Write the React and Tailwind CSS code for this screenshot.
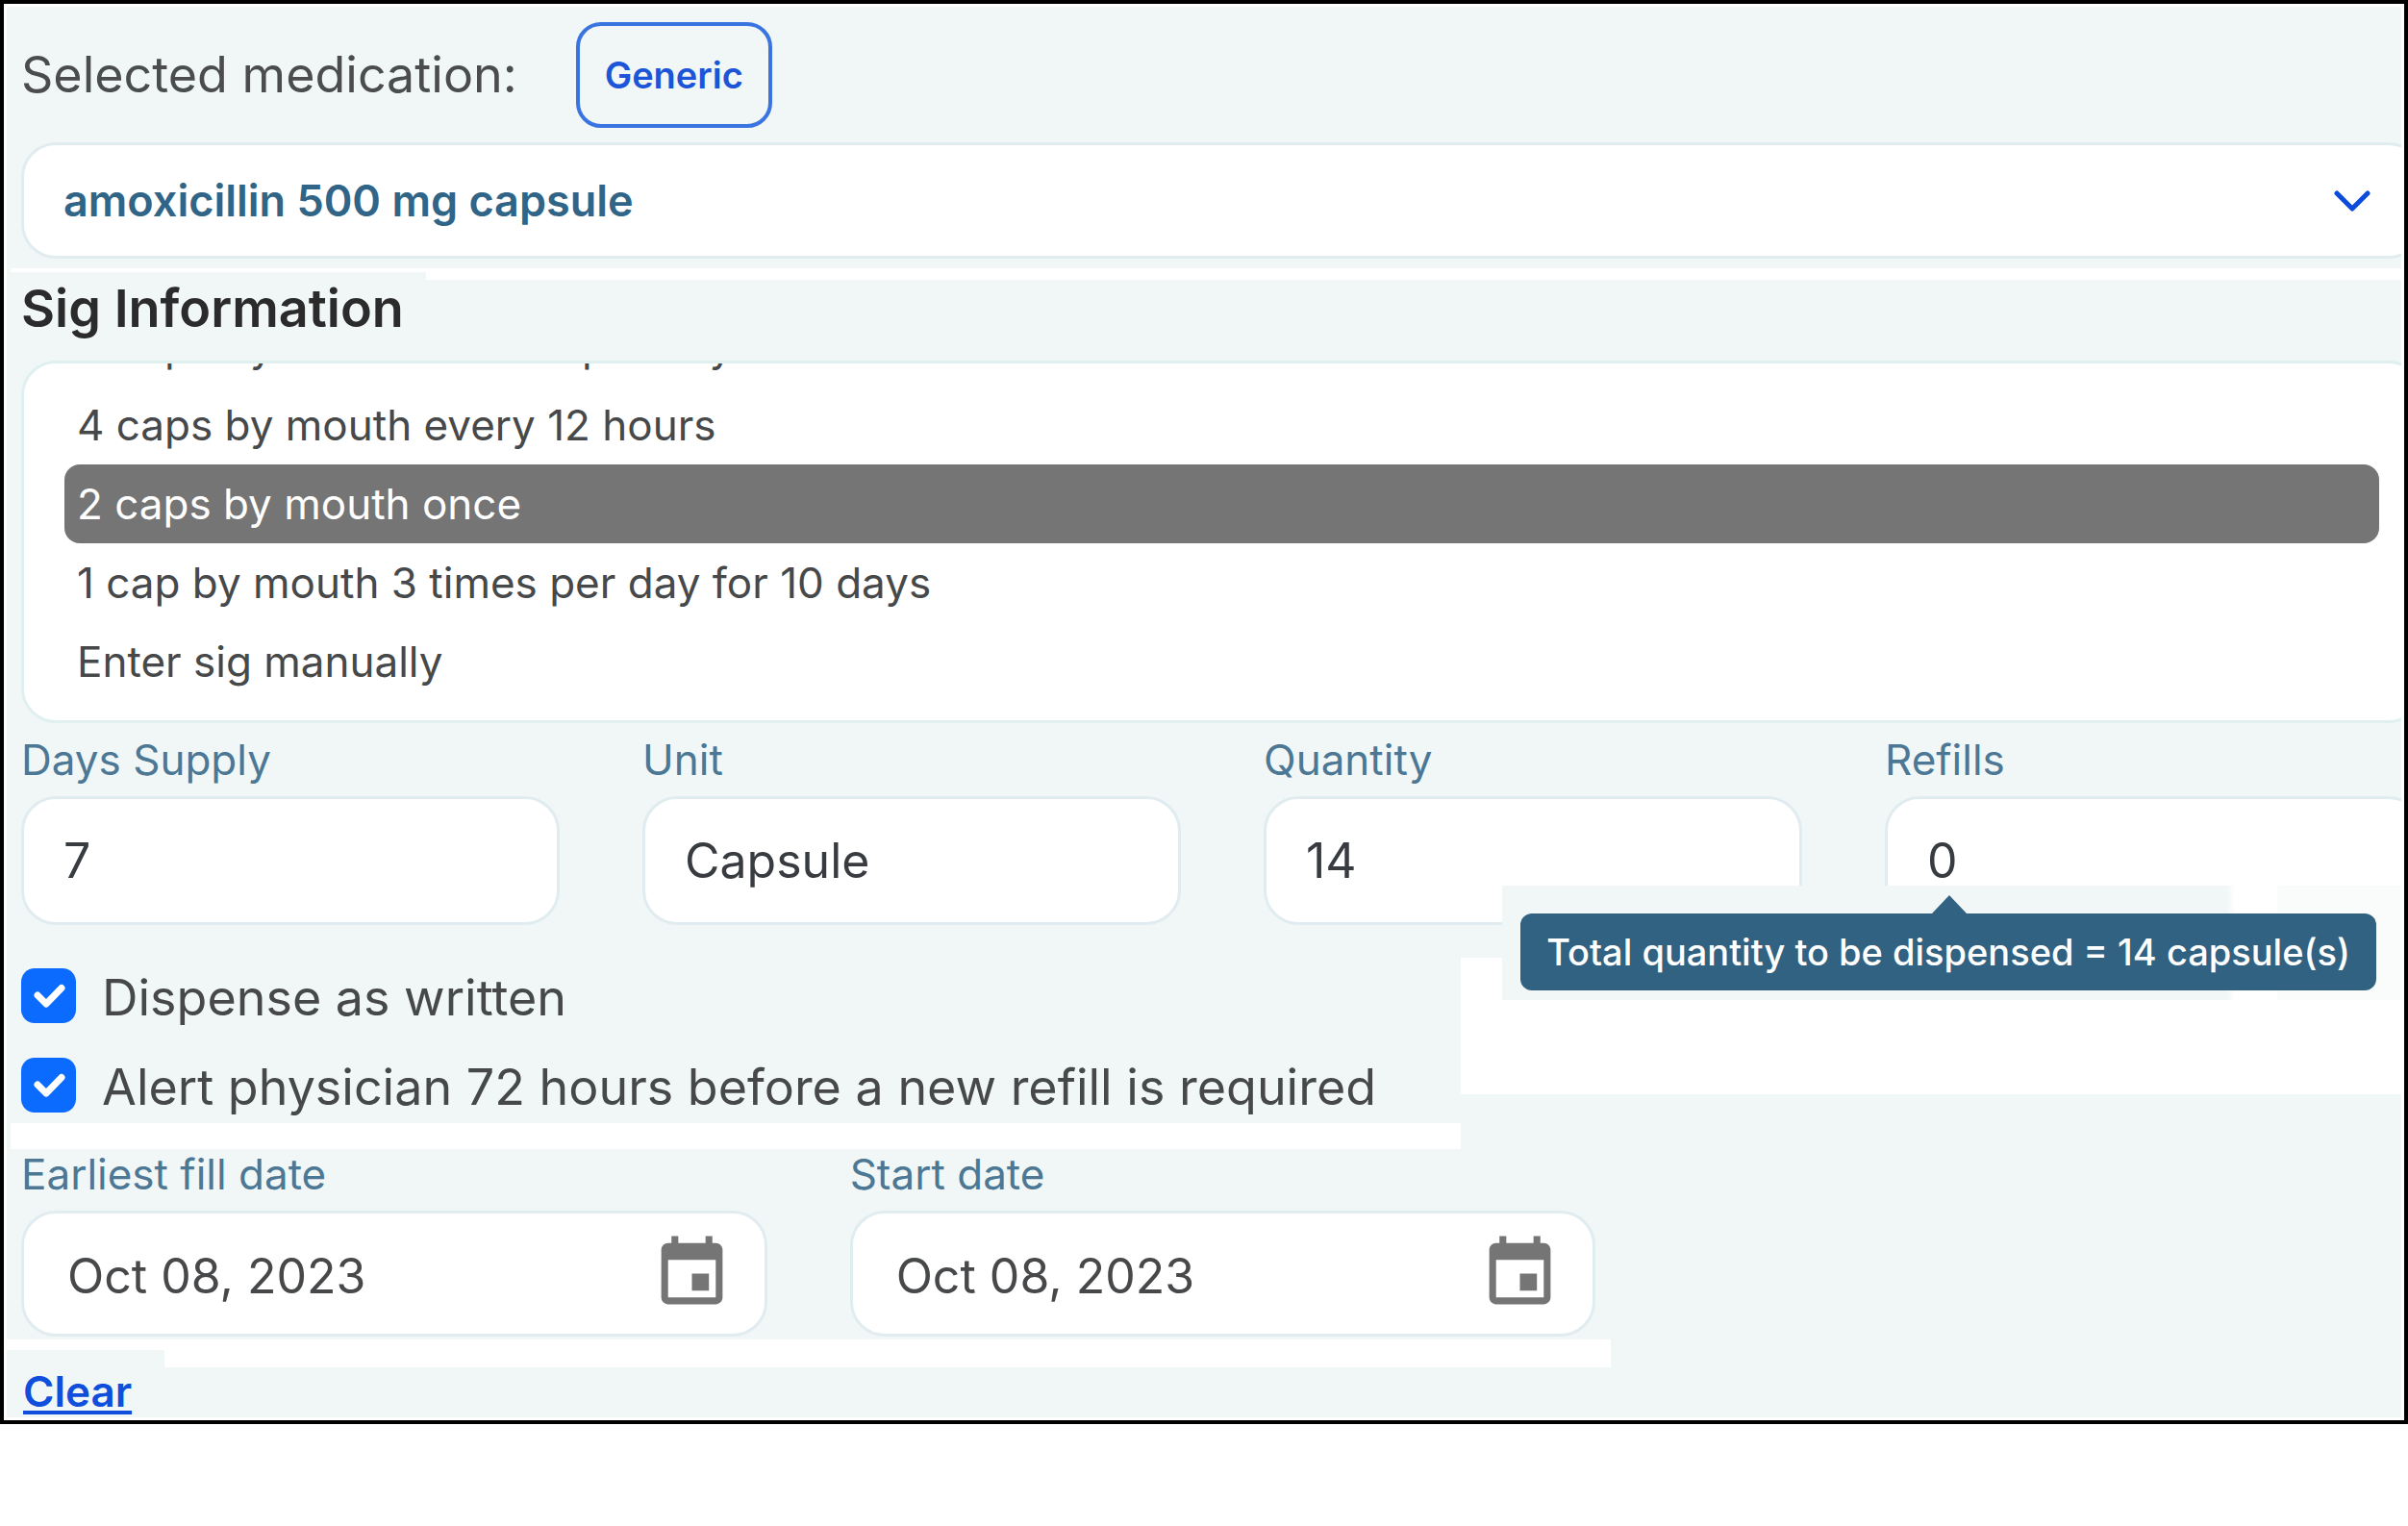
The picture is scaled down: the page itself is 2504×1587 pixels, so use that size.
import React, { useState } from "react";

const FIELD =
  "block w-full min-w-0 rounded-[36px] border-[3px] border-[#e0ecef] bg-white pl-[41px] text-[50px] text-[#383b3f] outline-none";

const SIGS = [
  "4 caps by mouth 3 times per day",
  "4 caps by mouth every 12 hours",
  "2 caps by mouth once",
  "1 cap by mouth 3 times per day for 10 days",
  "Enter sig manually",
];

function Label({ htmlFor, className, children }) {
  return (
    <label htmlFor={htmlFor} className={`block text-[44px] text-[#4c7795] ${className}`}>
      {children}
    </label>
  );
}

function NumberField({ id, label, value, children }) {
  return (
    <div className="relative min-w-0">
      <Label htmlFor={id} className="leading-[76px]">
        {label}
      </Label>
      <input id={id} type="text" defaultValue={value} className={`${FIELD} h-[134px]`} />
      {children}
    </div>
  );
}

function QuantityTip() {
  return (
    <div className="absolute top-[169px] right-[23px] z-10 flex h-[119px] items-end justify-end bg-[linear-gradient(90deg,#f1f7f7_0,#f1f7f7_754px,#fff_762px,#fff_804px,#f9fcfb_808px)] pr-[26px] pb-[10px] pl-[19px]">
      <div
        role="tooltip"
        className="relative rounded-[12px] bg-[#316282] px-[27px] text-[38px] leading-[80px] font-medium whitespace-nowrap text-white"
      >
        <span className="absolute bottom-full left-[428px] border-x-[18px] border-b-[19px] border-x-transparent border-b-[#316282]" />
        Total quantity to be dispensed = 14 capsule(s)
      </div>
    </div>
  );
}

function Check({ id, children }) {
  return (
    <div className="flex h-[57px] items-start">
      <span className="grid">
        <input
          id={id}
          type="checkbox"
          defaultChecked
          className="peer col-start-1 row-start-1 size-[57px] appearance-none rounded-[14px] bg-white checked:bg-[#0b6bff]"
        />
        <svg
          viewBox="0 0 57 57"
          className="pointer-events-none invisible col-start-1 row-start-1 size-[57px] peer-checked:visible"
          fill="none"
          stroke="#fff"
          strokeWidth="7"
          strokeLinecap="round"
          strokeLinejoin="round"
        >
          <path d="M17 28L26 37L42 20.5" />
        </svg>
      </span>
      <label htmlFor={id} className="pl-[27px] text-[52px] leading-[62px] whitespace-nowrap text-[#46484a]">
        {children}
      </label>
    </div>
  );
}

function DateField({ id, label }) {
  return (
    <div className="min-w-0">
      <Label htmlFor={id} className="mb-[12px] leading-[52px]">
        {label}
      </Label>
      <div className="flex h-[131px] items-center rounded-[36px] border-[3px] border-[#e0ecef] bg-white pr-[33px] pl-[45px]">
        <input
          id={id}
          type="text"
          defaultValue="Oct 08, 2023"
          className="h-full w-full min-w-0 flex-1 bg-transparent pt-[5px] text-[50px] text-[#46484a] outline-none"
        />
        <button type="button" aria-label={`Choose ${label.toLowerCase()}`}>
          <svg viewBox="0 0 24 24" className="size-[85px]" fill="#757575">
            <path d="M17 12h-5v5h5v-5zM16 1v2H8V1H6v2H5c-1.11 0-1.99.9-1.99 2L3 19c0 1.1.89 2 2 2h14c1.1 0 2-.9 2-2V5c0-1.1-.9-2-2-2h-1V1h-2zm3 18H5V8h14v11z" />
          </svg>
        </button>
      </div>
    </div>
  );
}

export default function App() {
  const [sig, setSig] = useState(2);
  return (
    <div className="min-h-screen bg-white font-['Inter',sans-serif]">
      <main className="border-4 border-black bg-white p-[3px]">
        <form className="overflow-hidden bg-[#f1f7f7] pb-[2px]" onSubmit={(e) => e.preventDefault()}>
          <section className="-mr-[23px] pt-[16px] pl-[15px]">
            <div className="flex items-center">
              <label htmlFor="med" className="text-[52px] leading-[76px] text-[#4a4c4e]">
                Selected medication:
              </label>
              <button
                type="button"
                className="ml-[61px] h-[110px] w-[204px] rounded-[26px] border-[4px] border-[#3a74e0] text-[38px] font-semibold text-[#1c55d8]"
              >
                Generic
              </button>
            </div>
            <div className="mt-[15px] grid items-center">
              <select
                id="med"
                className="col-start-1 row-start-1 h-[121px] w-full appearance-none rounded-[36px] border-[3px] border-[#e0ecef] bg-white pl-[41px] text-[45px] font-semibold text-[#316588] outline-none"
              >
                <option>amoxicillin 500 mg capsule</option>
              </select>
              <svg
                viewBox="0 0 38 22"
                className="pointer-events-none col-start-1 row-start-1 mr-[55px] h-[22px] w-[38px] justify-self-end"
                fill="none"
                stroke="#0a4bdc"
                strokeWidth="5"
                strokeLinecap="round"
                strokeLinejoin="round"
              >
                <path d="M3 3L19 19L35 3" />
              </svg>
            </div>
          </section>

          <div className="mt-[10px] ml-[4px] h-[12px] bg-white pt-[4px]">
            <div className="h-[8px] w-[432px] bg-[#f1f7f7]" />
          </div>

          <section className="-mr-[23px] pl-[15px]">
            <h2 className="mb-[24px] text-[54px] leading-[60px] font-semibold text-[#2b2b2b]">Sig Information</h2>
            <div
              role="listbox"
              aria-label="Sig Information"
              className="flex h-[377px] flex-col justify-end overflow-hidden rounded-[36px] border-[3px] border-[#e0efef] bg-white pr-[43px] pb-[20px] pl-[42px]"
            >
              {SIGS.map((text, i) => (
                <button
                  key={text}
                  type="button"
                  role="option"
                  aria-selected={i === sig}
                  onClick={() => setSig(i)}
                  className={`h-[82px] shrink-0 rounded-[16px] pl-[13px] text-left text-[44px] leading-[82px] ${
                    i === sig ? "bg-[#757575] text-white" : "text-[#46484a]"
                  }`}
                >
                  {text}
                </button>
              ))}
            </div>

            <div className="grid grid-cols-4 gap-[86px]">
              <NumberField id="days" label="Days Supply" value="7" />
              <NumberField id="unit" label="Unit" value="Capsule" />
              <NumberField id="quantity" label="Quantity" value="14" />
              <NumberField id="refills" label="Refills" value="0">
                <QuantityTip />
              </NumberField>
            </div>
          </section>

          <div className="grid grid-cols-[1512fr_978fr]">
            <div className="flex flex-col gap-[36px] pt-[45px] pb-[11px] pl-[15px]">
              <Check id="daw">Dispense as written</Check>
              <Check id="alert">Alert physician 72 hours before a new refill is required</Check>
            </div>
            <div className="mt-[34px] h-[142px] bg-white" />
            <div className="ml-[4px] h-[27px] bg-white" />
          </div>

          <section className="grid w-[67%] grid-cols-2 gap-[86px] pr-[16px] pl-[15px]">
            <DateField id="earliest" label="Earliest fill date" />
            <DateField id="start" label="Start date" />
          </section>

          <div className="mt-[3px] h-[29px] w-[67%] bg-white pt-[11px]">
            <div className="h-[18px] w-[164px] bg-[#f1f7f7]" />
          </div>
          <div className="pl-[17px]">
            <a
              href="#clear"
              className="block w-fit text-[44px] leading-[50px] font-semibold text-[#0f4fdc] underline decoration-[4px] underline-offset-[4px]"
            >
              Clear
            </a>
          </div>
        </form>
      </main>
    </div>
  );
}
